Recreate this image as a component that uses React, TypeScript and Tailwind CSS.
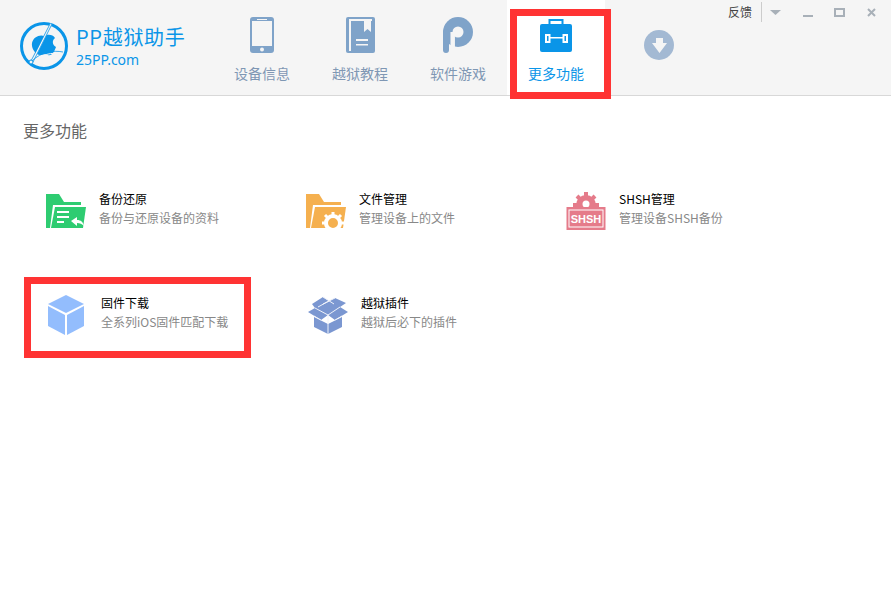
import type { ReactNode } from "react"

const FONT = "font-['Noto_Sans_CJK_SC','Noto_Sans',sans-serif]"

function PhoneIcon() {
  return (
    <svg width="24" height="36" viewBox="0 0 24 36">
      <rect width="24" height="36" rx="3" fill="#7fa3c9" />
      <rect x="2" y="4" width="20" height="25" fill="#f5f5f5" />
      <rect x="7" y="2" width="10" height="1" fill="#f5f5f5" />
      <circle cx="12" cy="32.500" r="2" fill="#f5f5f5" />
    </svg>
  )
}

function BookIcon() {
  return (
    <svg width="29" height="36" viewBox="0 0 29 36">
      <rect width="29" height="36" rx="2" fill="#7fa3c9" />
      <rect x="3" y="2" width="23" height="2" fill="#f5f5f5" />
      <rect x="3" y="4" width="2" height="30" fill="#f5f5f5" />
      <path d="M18 4h7v11l-3.500-3-3.500 3z" fill="#f5f5f5" />
      <rect x="10" y="22" width="12" height="2" fill="#f5f5f5" />
      <rect x="10" y="27" width="12" height="1.500" fill="#f5f5f5" />
    </svg>
  )
}

function PIcon() {
  return (
    <svg width="30" height="36" viewBox="0 0 30 36">
      <circle cx="15" cy="15" r="15" fill="#7fa3c9" />
      <path d="M3 15V33" stroke="#7fa3c9" strokeWidth="6" strokeLinecap="round" />
      <path d="M9.700 15V36" stroke="#f5f5f5" strokeWidth="4.500" />
      <circle cx="15" cy="15" r="5.500" fill="#f5f5f5" />
    </svg>
  )
}

function CaseIcon() {
  return (
    <svg width="32" height="33" viewBox="0 0 32 33">
      <path d="M9.500 6V1h13v5" fill="none" stroke="#0a95e8" strokeWidth="2" />
      <rect y="5" width="32" height="28" rx="2" fill="#0a95e8" />
      <rect x="10" y="18" width="13" height="1.500" fill="#fff" />
      <rect x="5" y="15" width="5.500" height="9" fill="#fff" />
      <rect x="7" y="17" width="1.500" height="5" fill="#0a95e8" />
      <rect x="22.500" y="15" width="5.500" height="9" fill="#fff" />
      <rect x="24.500" y="17" width="1.500" height="5" fill="#0a95e8" />
    </svg>
  )
}

function DownIcon() {
  return (
    <svg width="30" height="30" viewBox="0 0 30 30">
      <circle cx="15" cy="15" r="15" fill="#a3b9d3" />
      <path d="M12 8h7v5h4l-7.500 10L8 13h4z" fill="#f5f5f5" />
    </svg>
  )
}

function Logo() {
  return (
    <svg width="50" height="50" viewBox="0 0 50 50">
      <circle cx="25" cy="25" r="22.500" fill="none" stroke="#0a95e8" strokeWidth="3" />
      <path
        d="M25 15c3-2 9-2 11 2-3 2-3 7 1 9-2 6-5 9-8 8-2-1-4-1-7 0-5 1-10-7-9-12 1-6 8-9 12-7z"
        fill="#0a95e8"
      />
      <path d="M32 3 13 41" fill="none" stroke="#f5f5f5" strokeWidth="2" />
      <path d="M33 3 14 41M31 3 12 40M44 31c-10-2-22 0-31 9" fill="none" stroke="#0a95e8" strokeWidth="0.800" />
      <path d="M43 33c-10-2-21 0-29 9" fill="none" stroke="#f5f5f5" strokeWidth="1" />
      <circle cx="12" cy="41" r="2" fill="#f5f5f5" stroke="#0a95e8" />
    </svg>
  )
}

function GreenFolder() {
  return (
    <svg width="40" height="34" viewBox="0 0 40 34">
      <path d="M0 0h13l5 8h17v3H7L4 34H0z" fill="#2ecc71" />
      <path d="M9 13h31l-3 21H5z" fill="#2ecc71" />
      <path d="M11 17h12v2H11zM11 22h12v2H11zM11 27h7v2h-7z" fill="#fff" />
      <path d="M25 27l6-4v3c4 0 6 2 7 6-2-2-4-3-7-3v3z" fill="#fff" />
    </svg>
  )
}

function OrangeFolder() {
  return (
    <svg width="40" height="34" viewBox="0 0 40 34">
      <path d="M0 0h13l5 8h17v3H7L4 34H0z" fill="#f5b04f" />
      <path d="M9 13h31l-3 21H5z" fill="#f5b04f" />
      <circle cx="27" cy="29" r="7" fill="none" stroke="#fff" strokeWidth="4" />
      <path
        d="M27 18v4M27 36v-2M16 29h4M38 29h-4M19 21l3 3M35 21l-3 3M19 37l3-3M35 37l-3-3"
        stroke="#fff"
        strokeWidth="3"
      />
    </svg>
  )
}

function ShshIcon() {
  return (
    <svg width="40" height="38" viewBox="0 0 40 38">
      <circle cx="20" cy="13" r="10" fill="#e57b8a" />
      <path d="M20 0v26M7 13h26M11 4l18 18M29 4 11 22" stroke="#e57b8a" strokeWidth="4" />
      <circle cx="20" cy="12" r="3.500" fill="#fff" />
      <rect x="0.500" y="15" width="39" height="23" fill="#e57b8a" />
      <rect x="3" y="18" width="34" height="17" fill="#e57b8a" stroke="#fff" strokeWidth="1" />
      <text
        x="20"
        y="30.500"
        textAnchor="middle"
        fill="#fff"
        fontSize="11"
        fontWeight="700"
        fontFamily="Liberation Sans, sans-serif"
      >
        SHSH
      </text>
    </svg>
  )
}

function CubeIcon() {
  return (
    <svg width="36" height="40" viewBox="0 0 36 40">
      <path d="M18 0 36 9 18 18 0 9z" fill="#93bdfd" />
      <path d="M0 11 17 20V40L0 31z" fill="#93bdfd" />
      <path d="M36 11 19 20V40L36 31z" fill="#93bdfd" />
    </svg>
  )
}

function BoxIcon() {
  return (
    <svg width="40" height="38" viewBox="0 0 40 38">
      <path d="M6 21 20 28 34 21V31L20 38 6 31z" fill="#7b97d1" />
      <path d="M4 8 15 1 21 5 27 2 38 7 32 11 40 16 27 24 20 19 13 24 0 16 7 12z" fill="#7b97d1" />
      <path
        d="M7 12 20 19 32 11M21 5 10 11M27 2 15 8M20 19V38M13 24 6 20M27 24 34 20M15 1 26 8"
        fill="none"
        stroke="#f0f3fa"
        strokeWidth="1"
      />
    </svg>
  )
}

function Tab({ icon, label, active }: { icon: ReactNode; label: string; active?: boolean }) {
  return (
    <div
      className={`w-[98px] h-full flex flex-col items-center ${active ? "bg-white text-[#0a95e8]" : "text-[#7f97b4]"}`}
    >
      <div className="h-[36px] mt-[17px] flex items-center justify-center">{icon}</div>
      <div className="mt-[11px] text-[14px] leading-[18px]">{label}</div>
    </div>
  )
}

function Feature({ icon, title, desc }: { icon: ReactNode; title: string; desc: string }) {
  return (
    <div className="w-[260px] flex items-center h-[40px]">
      <div className="w-[53px] mt-[5px] flex items-center">{icon}</div>
      <div>
        <div className="text-[12px] leading-[18px] text-black">{title}</div>
        <div className="text-[12px] leading-[18px] mt-px text-[#888888]">{desc}</div>
      </div>
    </div>
  )
}

export default function App() {
  return (
    <div className={`relative w-[891px] h-[593px] bg-white overflow-hidden ${FONT}`}>
      {/* Header */}
      <header className="h-[96px] flex bg-[#f5f5f5] border-b border-[#d8d8d8]">
        <div className="w-[213px] flex items-center pl-[19px] pb-[3px]">
          <Logo />
          <div className="ml-[7px] text-[#0a95e8]">
            <div className="text-[20px] leading-[26px] tracking-[0.7px] font-['Noto_Sans_CJK_SC',sans-serif]">
              PP越狱助手
            </div>
            <div className="text-[14px] leading-[18px] mt-[1px] font-['Noto_Sans',sans-serif]">25PP.com</div>
          </div>
        </div>

        <Tab icon={<PhoneIcon />} label="设备信息" />
        <Tab icon={<BookIcon />} label="越狱教程" />
        <Tab icon={<PIcon />} label="软件游戏" />
        <Tab icon={<CaseIcon />} label="更多功能" active />

        <div className="ml-[39px] mt-[30px]">
          <DownIcon />
        </div>

        {/* Window controls */}
        <div className="ml-[54px] h-[24px] flex items-center">
          <span className="text-[12px] text-[#444444] leading-[24px]">反馈</span>
          <div className="ml-[9px] w-px h-[20px] bg-[#cccccc]" />
          <svg className="ml-[8px]" width="11" height="5" viewBox="0 0 11 5">
            <path d="M0 0h11L5.500 5z" fill="#a8b0b8" />
          </svg>
          <svg className="ml-[22px]" width="10" height="10" viewBox="0 0 10 10">
            <rect y="8" width="10" height="2" fill="#a8b0b8" />
          </svg>
          <svg className="ml-[21px]" width="11" height="9" viewBox="0 0 11 9">
            <rect x="1" y="1" width="9" height="7" fill="none" stroke="#a8b0b8" strokeWidth="2" />
          </svg>
          <svg className="ml-[22px]" width="9" height="9" viewBox="0 0 9 9">
            <path d="M1 1l7 7M8 1 1 8" stroke="#a8b0b8" strokeWidth="2" />
          </svg>
        </div>
      </header>

      {/* Content */}
      <main className="pl-[23px]">
        <h2 className="mt-[23px] text-[16px] leading-[22px] font-normal text-[#666666]">更多功能</h2>
        <div className="mt-[47px] ml-[23px] flex">
          <Feature icon={<GreenFolder />} title="备份还原" desc="备份与还原设备的资料" />
          <Feature icon={<OrangeFolder />} title="文件管理" desc="管理设备上的文件" />
          <Feature icon={<ShshIcon />} title="SHSH管理" desc="管理设备SHSH备份" />
        </div>
        <div className="mt-[64px] ml-[25px] flex">
          <Feature icon={<CubeIcon />} title="固件下载" desc="全系列iOS固件匹配下载" />
          <Feature icon={<BoxIcon />} title="越狱插件" desc="越狱后必下的插件" />
        </div>
      </main>

      {/* Red annotation boxes */}
      <div className="absolute left-[510px] top-[9px] w-[101px] h-[90px] border-[7px] border-[#ff3333]" />
      <div className="absolute left-[24px] top-[277px] w-[227px] h-[81px] border-[7px] border-[#ff3333]" />
    </div>
  )
}
